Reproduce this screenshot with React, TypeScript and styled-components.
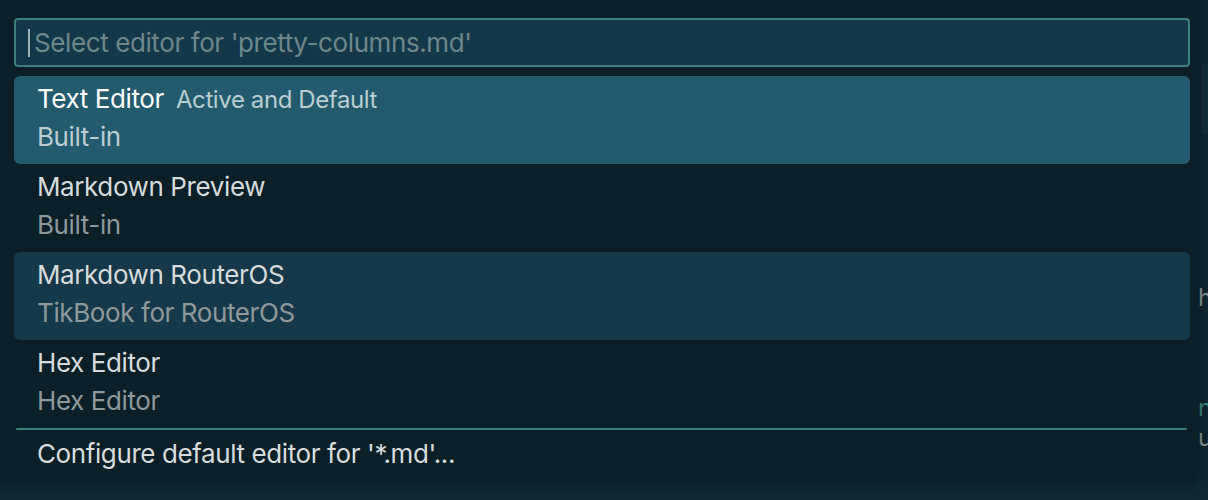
import React from "react";
import styled, { createGlobalStyle } from "styled-components";

const Global = createGlobalStyle`
  html, body { margin: 0; padding: 0; background: #0e2630; }
  body { font-family: Inter, "Noto Sans", sans-serif; -webkit-font-smoothing: antialiased; }
  #root { width: 1208px; height: 500px; overflow: hidden; position: relative; }
`;

const Editor = styled.div`
  position: relative;
  width: 1208px;
  height: 500px;
  background: #0f2832;
  overflow: hidden;
`;

const Gutter = styled.div`
  position: absolute;
  top: 0;
  right: 0;
  width: 12px;
  height: 500px;
  font-family: Inter, sans-serif;
  font-size: 24px;
  color: #8a9aa0;
`;

const GutterLine = styled.div<{ $top: number; $color?: string }>`
  position: absolute;
  left: 2px;
  top: ${(p) => p.$top}px;
  line-height: 28px;
  color: ${(p) => p.$color || "#8a9aa0"};
`;

const Minimap = styled.div`
  position: absolute;
  right: 0;
  top: 64px;
  width: 6px;
  height: 70px;
  background: #13303c;
`;

const Panel = styled.div`
  position: absolute;
  left: -12px;
  top: -8px;
  width: 1209px;
  height: 488px;
  background: #0b1f29;
  border-radius: 10px;
  box-shadow: 0 0 14px 4px rgba(0, 0, 0, 0.35);
  display: flex;
  flex-direction: column;
  padding: 26px 7px 0 26px;
  box-sizing: border-box;
`;

const InputBox = styled.div`
  height: 49px;
  box-sizing: border-box;
  border: 2px solid #3a7e7e;
  border-radius: 4px;
  background: #14384a;
  display: flex;
  align-items: center;
  padding-left: 12px;
`;

const Caret = styled.span`
  width: 2px;
  height: 28px;
  background: #9fb3b8;
  margin-right: 4px;
`;

const Placeholder = styled.span`
  font-size: 26px;
  color: #6e878d;
  line-height: 1;
  letter-spacing: -0.4px;
`;

const List = styled.div`
  margin-top: 9px;
  display: flex;
  flex-direction: column;
`;

const Row = styled.div<{ $variant?: "active" | "hover" }>`
  height: 88px;
  box-sizing: border-box;
  padding: 4px 23px 4px;
  border-radius: 6px;
  background: ${(p) =>
    p.$variant === "active" ? "#245a6e" : p.$variant === "hover" ? "#15394a" : "transparent"};
  display: flex;
  flex-direction: column;
`;

const LabelLine = styled.div`
  height: 38px;
  line-height: 38px;
  display: flex;
  align-items: baseline;
  gap: 12px;
  white-space: nowrap;
`;

const Label = styled.span<{ $active?: boolean }>`
  font-size: 26px;
  letter-spacing: -0.4px;
  color: ${(p) => (p.$active ? "#ffffff" : "#d6dcdd")};
`;

const Description = styled.span`
  font-size: 24px;
  letter-spacing: -0.4px;
  color: #b9cdd3;
`;

const Detail = styled.div<{ $active?: boolean }>`
  height: 38px;
  line-height: 38px;
  font-size: 26px;
  letter-spacing: -0.4px;
  color: ${(p) => (p.$active ? "#bccdd3" : "#8d999d")};
  white-space: nowrap;
`;

const Separator = styled.div`
  height: 2px;
  background: #3a7e7e;
  margin: 0 3px 0 2px;
  border-radius: 1px;
`;

const SingleRow = styled.div`
  height: 48px;
  line-height: 48px;
  padding: 0 23px;
  font-size: 26px;
  letter-spacing: -0.4px;
  color: #d6dcdd;
  white-space: nowrap;
`;

const items = [
  { label: "Text Editor", desc: "Active and Default", detail: "Built-in", variant: "active" as const },
  { label: "Markdown Preview", detail: "Built-in" },
  { label: "Markdown RouterOS", detail: "TikBook for RouterOS", variant: "hover" as const },
  { label: "Hex Editor", detail: "Hex Editor" },
];

export default function App() {
  return (
    <>
      <Global />
      <Editor>
        <Minimap />
        <Gutter>
          <GutterLine $top={284}>h</GutterLine>
          <GutterLine $top={394} $color="#3f8a86">n</GutterLine>
          <GutterLine $top={424}>u</GutterLine>
        </Gutter>
        <Panel>
          <InputBox>
            <Caret />
            <Placeholder>Select editor for 'pretty-columns.md'</Placeholder>
          </InputBox>
          <List>
            {items.map((it) => (
              <Row key={it.label} $variant={it.variant}>
                <LabelLine>
                  <Label $active={it.variant === "active"}>{it.label}</Label>
                  {it.desc && <Description>{it.desc}</Description>}
                </LabelLine>
                <Detail $active={it.variant === "active"}>{it.detail}</Detail>
              </Row>
            ))}
            <Separator />
            <SingleRow>Configure default editor for '*.md'...</SingleRow>
          </List>
        </Panel>
      </Editor>
    </>
  );
}
